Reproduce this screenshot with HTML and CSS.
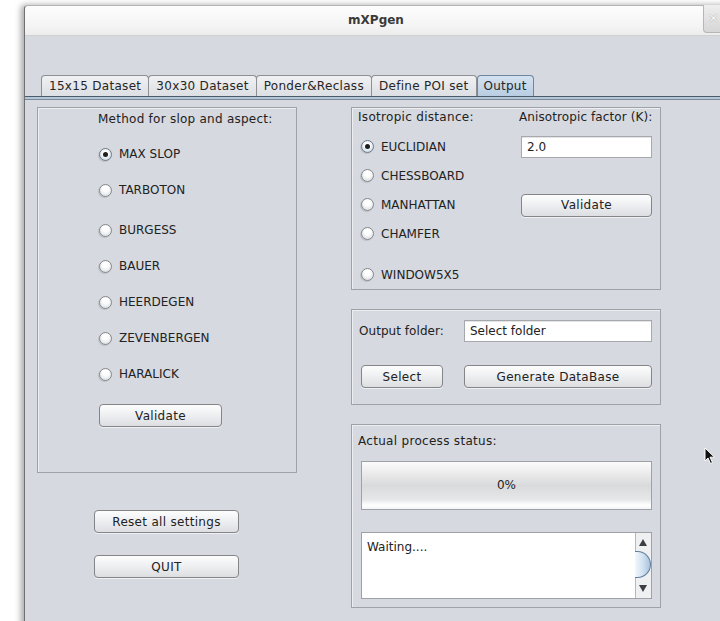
FILE: index.html
```html
<!DOCTYPE html>
<html>
<head>
<meta charset="utf-8">
<title>mXPgen</title>
<link rel="stylesheet" href="styles.css">
</head>
<body>
<div class="desk">
  <div class="window">
    <div class="titlebar">
      <span class="title">mXPgen</span>
      <span class="close">×</span>
    </div>

    <div class="tabs">
      <div class="tab">15x15 Dataset</div>
      <div class="tab">30x30 Dataset</div>
      <div class="tab">Ponder&amp;Reclass</div>
      <div class="tab">Define POI set</div>
      <div class="tab active">Output</div>
    </div>
    <div class="tabline"></div>

    <div class="content">
      <div class="leftcol">
        <div class="panel methods">
          <div class="methods-title">Method for slop and aspect:</div>
          <div class="radio-list">
            <div class="radio-row"><span class="radio checked"></span>MAX SLOP</div>
            <div class="radio-row"><span class="radio"></span>TARBOTON</div>
            <div class="radio-row spaced"><span class="radio"></span>BURGESS</div>
            <div class="radio-row"><span class="radio"></span>BAUER</div>
            <div class="radio-row"><span class="radio"></span>HEERDEGEN</div>
            <div class="radio-row"><span class="radio"></span>ZEVENBERGEN</div>
            <div class="radio-row"><span class="radio"></span>HARALICK</div>
          </div>
          <button class="btn methods-validate">Validate</button>
        </div>
        <div class="global-actions">
          <button class="btn global-btn">Reset all settings</button>
          <button class="btn global-btn">QUIT</button>
        </div>
      </div>

      <div class="rightcol">
        <div class="panel distance">
          <div class="dist-head">Isotropic distance:</div>
          <div class="dist-head narrow">Anisotropic factor (K):</div>

          <div class="dist-radio"><span class="radio checked"></span>EUCLIDIAN</div>
          <div class="dist-cell"><div class="field k-field">2.0</div></div>

          <div class="dist-radio"><span class="radio"></span>CHESSBOARD</div>
          <div class="dist-cell"></div>

          <div class="dist-radio"><span class="radio"></span>MANHATTAN</div>
          <div class="dist-cell"><button class="btn k-validate">Validate</button></div>

          <div class="dist-radio"><span class="radio"></span>CHAMFER</div>
          <div class="dist-cell"></div>

          <div class="dist-radio last"><span class="radio"></span>WINDOW5X5</div>
          <div class="dist-cell"></div>
        </div>

        <div class="panel output">
          <div class="out-row">
            <span class="out-label">Output folder:</span>
            <div class="field folder-field">Select folder</div>
          </div>
          <div class="out-row buttons">
            <button class="btn select-btn">Select</button>
            <button class="btn generate-btn">Generate DataBase</button>
          </div>
        </div>

        <div class="panel status">
          <div class="status-title">Actual process status:</div>
          <div class="progress">0%</div>
          <div class="log">
            <div class="log-text">Waiting....</div>
            <div class="scrollbar">
              <span class="arrow up"></span>
              <span class="thumb"></span>
              <span class="arrow down"></span>
            </div>
          </div>
        </div>
      </div>
    </div>
  </div>

  <svg class="cursor" width="12" height="18" viewBox="0 0 12 18">
    <path d="M1 1 L1 14 L4 11 L6.5 16.5 L8.5 15.6 L6 10.2 L10.5 10.2 Z" fill="#111" stroke="#fff" stroke-width="1"/>
  </svg>
</div>
</body>
</html>
```

FILE: styles.css
```css
* {
  box-sizing: border-box;
}

html, body {
  margin: 0;
  padding: 0;
  width: 720px;
  height: 621px;
  overflow: hidden;
  background: #ffffff;
}

body {
  font-family: "DejaVu Sans", "Liberation Sans", sans-serif;
  font-size: 12px;
  letter-spacing: 0.25px;
  white-space: nowrap;
  color: #222;
}

.desk {
  position: relative;
  height: 621px;
  padding: 5px 0 0 24px;
}

/* ---------- window frame ---------- */
.window {
  width: 740px;
  height: 640px;
  background: #d6d9df;
  border-left: 1px solid #6f7074;
  border-top: 1px solid #b4b4b4;
  border-radius: 4px 4px 0 0;
  box-shadow: -3px 0 6px rgba(0, 0, 0, 0.35);
}

.titlebar {
  position: relative;
  height: 30px;
  background: linear-gradient(#fdfdfd, #f4f4f4 70%, #ececec);
  border-radius: 4px 4px 0 0;
  border-bottom: 1px solid #d0d0d0;
}

.title {
  display: block;
  width: 702px;
  text-align: center;
  line-height: 28px;
  font-weight: bold;
  letter-spacing: 0;
  color: #3a3a3a;
}

.close {
  position: absolute;
  left: 678px;
  top: -1px;
  width: 30px;
  height: 28px;
  background: linear-gradient(#eeeeee, #d6d6d6);
  border: 1px solid #b6b6b6;
  border-top: none;
  border-radius: 0 0 0 4px;
  color: #ffffff;
  font-size: 13px;
  line-height: 26px;
  padding-left: 4px;
  text-shadow: 0 0 1px #777;
}

/* ---------- tabs ---------- */
.tabs {
  display: flex;
  margin-top: 39px;
  padding-left: 16px;
  height: 21px;
}

.tab {
  height: 21px;
  padding: 0 7px;
  line-height: 20px;
  letter-spacing: 0.3px;
  border: 1px solid #8d8f93;
  border-bottom: none;
  border-radius: 4px 4px 0 0;
  margin-right: -1px;
  background: linear-gradient(#f0f1f3, #dcdfe3);
  color: #262626;
}

.tab.active {
  position: relative;
  padding: 0 6px 0 6px;
  letter-spacing: 0.25px;
  background: linear-gradient(#d4e2f0, #b9cde2);
  border-color: #6c87a3;
  margin-left: 1px;
}

.tabline {
  height: 4px;
  border-top: 1px solid #4f5b68;
  border-bottom: 1px solid #7b8996;
  background: #b2c6da;
}

/* ---------- main content ---------- */
.content {
  display: grid;
  grid-template-columns: 260px 310px;
  column-gap: 54px;
  padding: 7px 0 0 12px;
  align-items: start;
}

.panel {
  border: 1px solid #9ea1a6;
  box-shadow: inset 1px 1px 0 #eceef1;
}

/* left column */
.methods {
  height: 366px;
  padding-top: 3px;
}

.methods-title {
  margin-left: 60px;
  line-height: 16px;
}

.radio-list {
  margin-top: 9px;
  padding-left: 61px;
}

.radio-row {
  display: flex;
  align-items: center;
  height: 36px;
  letter-spacing: 0;
}

.radio-row.spaced {
  margin-top: 4px;
}

.radio {
  flex: none;
  width: 13px;
  height: 13px;
  border-radius: 50%;
  border: 1px solid #85888d;
  background: radial-gradient(circle at 50% 35%, #ffffff 30%, #e3e5e8 70%, #cfd2d6);
  box-shadow: -1px 1px 1px rgba(0, 0, 0, 0.12);
  margin-right: 7px;
  position: relative;
}

.radio.checked {
  border-color: #6e7a88;
  background: radial-gradient(circle at 50% 40%, #ffffff 30%, #cfdbe8 75%, #aebfd2);
}

.radio.checked::after {
  content: "";
  position: absolute;
  left: 3px;
  top: 3px;
  width: 5px;
  height: 5px;
  border-radius: 50%;
  background: #1e1e1e;
}

.btn {
  font-family: "DejaVu Sans", "Liberation Sans", sans-serif;
  font-size: 12px;
  letter-spacing: 0.3px;
  color: #222;
  height: 23px;
  padding: 0;
  border: 1px solid #838589;
  border-radius: 4px;
  background: linear-gradient(#fdfdfd, #eff0f2 45%, #dcdee1);
  box-shadow: 0 1px 0 rgba(255, 255, 255, 0.6);
}

.methods-validate {
  display: block;
  width: 123px;
  margin: 12px 0 0 61px;
}

.global-actions {
  display: flex;
  flex-direction: column;
  gap: 22px;
  margin-top: 37px;
  padding-left: 57px;
}

.global-btn {
  width: 145px;
}

/* right column */
.rightcol {
  display: flex;
  flex-direction: column;
  gap: 19px;
}

.distance {
  height: 183px;
  display: grid;
  grid-template-columns: 161px 135px;
  grid-template-rows: 24px 29px 29px 29px 29px 41px;
  padding-left: 6px;
}

.dist-head {
  line-height: 18px;
  letter-spacing: 0.3px;
}

.dist-head.narrow {
  letter-spacing: 0.1px;
}

.dist-radio {
  display: flex;
  align-items: center;
  padding-left: 3px;
  letter-spacing: 0;
}

.dist-radio.last {
  align-self: end;
  height: 29px;
}

.dist-cell {
  display: flex;
  align-items: center;
  padding-left: 2px;
}

.field {
  background: #ffffff;
  border: 1px solid #a5a8ad;
  box-shadow: inset 0 1px 0 #e4e4e4;
  padding-left: 5px;
  line-height: 20px;
  letter-spacing: 0;
  color: #222;
}

.k-field {
  width: 131px;
  height: 22px;
  margin-top: 1px;
}

.k-validate {
  width: 131px;
  margin-top: 1px;
}

.output {
  height: 96px;
  padding: 10px 0 0 6px;
}

.out-row {
  display: flex;
  align-items: center;
}

.out-label {
  width: 106px;
  margin-left: 1px;
  margin-right: -1px;
  letter-spacing: 0.05px;
}

.folder-field {
  width: 188px;
  height: 22px;
}

.out-row.buttons {
  margin-top: 23px;
}

.select-btn {
  width: 82px;
  margin-left: 3px;
  margin-right: 21px;
}

.generate-btn {
  width: 188px;
}

.status {
  height: 184px;
  padding: 8px 0 0 6px;
}

.status-title {
  line-height: 16px;
  letter-spacing: 0.3px;
}

.progress {
  width: 291px;
  height: 49px;
  margin: 12px 0 0 3px;
  border: 1px solid #9ea1a6;
  background: linear-gradient(#fbfbfb, #eeeeee 20%, #d9dadc 50%, #e6e7e9 80%, #ffffff 92%, #f3f4f6);
  text-align: center;
  line-height: 47px;
  letter-spacing: 0;
}

.log {
  display: flex;
  width: 291px;
  height: 67px;
  margin: 22px 0 0 3px;
  border: 1px solid #9ea2a8;
  background: #ffffff;
}

.log-text {
  flex: 1;
  padding: 6px 0 0 5px;
  line-height: 16px;
  letter-spacing: 0;
}

.scrollbar {
  position: relative;
  width: 16px;
  background: #eef0f2;
  border-left: 1px solid #b5b8bc;
}

.arrow {
  position: absolute;
  left: 3px;
  width: 0;
  height: 0;
  border-left: 4px solid transparent;
  border-right: 4px solid transparent;
}

.arrow.up {
  top: 6px;
  border-bottom: 7px solid #3d3f42;
}

.arrow.down {
  bottom: 6px;
  border-top: 7px solid #3d3f42;
}

.thumb {
  position: absolute;
  left: -1px;
  top: 18px;
  width: 16px;
  height: 27px;
  border: 1px solid #617f9d;
  border-left: none;
  border-radius: 0 14px 14px 0 / 0 14px 14px 0;
  background: linear-gradient(90deg, #f2f7fc, #cfe0f0 55%, #a9c3de);
}

.cursor {
  position: absolute;
  left: 704px;
  top: 447px;
}
```
